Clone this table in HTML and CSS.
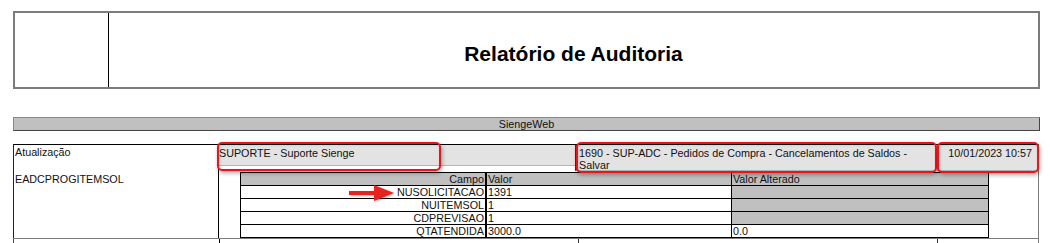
FILE: index.html
```html
<!DOCTYPE html>
<html lang="pt-BR">
<head>
<meta charset="utf-8">
<title>Relatório de Auditoria</title>
<link rel="stylesheet" href="styles.css">
</head>
<body>
<div class="page">
  <div class="hdr">
    <div class="hdr-logo"></div>
    <div class="hdr-title">Relatório de Auditoria</div>
  </div>
  <div class="bar">SiengeWeb</div>
  <div class="main">
    <div class="labels">
      <div class="lbl">Atualização</div>
      <div class="lbl lbl-entity">EADCPROGITEMSOL</div>
    </div>
    <div class="content">
      <div class="toprow">
        <div class="cell c-user">SUPORTE - Suporte Sienge</div>
        <div class="cell c-op">1690 - SUP-ADC - Pedidos de Compra - Cancelamentos de Saldos - Salvar</div>
        <div class="cell c-date">10/01/2023 10:57</div>
      </div>
      <table class="fields">
        <tr class="th">
          <td class="campo">Campo</td>
          <td class="valor">Valor</td>
          <td class="alt">Valor Alterado</td>
        </tr>
        <tr>
          <td class="campo">NUSOLICITACAO</td>
          <td class="valor">1391</td>
          <td class="alt grey"></td>
        </tr>
        <tr>
          <td class="campo">NUITEMSOL</td>
          <td class="valor">1</td>
          <td class="alt grey"></td>
        </tr>
        <tr>
          <td class="campo">CDPREVISAO</td>
          <td class="valor">1</td>
          <td class="alt grey"></td>
        </tr>
        <tr>
          <td class="campo">QTATENDIDA</td>
          <td class="valor">3000.0</td>
          <td class="alt">0.0</td>
        </tr>
      </table>
    </div>
  </div>
  <div class="nextrow">
    <div class="n1"></div>
    <div class="n2"></div>
    <div class="n3"></div>
    <div class="n4"></div>
  </div>

  <div class="mark mark-user"></div>
  <div class="mark mark-op"></div>
  <div class="mark mark-date"></div>
  <svg class="arrow" width="48" height="18" viewBox="0 0 48 18">
    <path d="M1 7 H26 V1 L46 9 L26 17 V11 H1 Z" fill="#e8231f"/>
  </svg>
</div>
</body>
</html>
```

FILE: styles.css
```css
html, body {
  margin: 0;
  padding: 0;
  background: #fff;
}

body {
  font-family: "Liberation Sans", Arial, sans-serif;
  font-size: 10.75px;
  color: #111;
}

.page {
  position: relative;
  padding: 11px 10px 0 13px;
  height: 232px;
  overflow: hidden;
}

.hdr {
  display: grid;
  grid-template-columns: 94px 1fr;
  width: 1027px;
  height: 78px;
  box-sizing: border-box;
  border: 2px solid #7c7c7c;
}

.hdr-logo {
  border-right: 1px solid #000;
}

.hdr-title {
  display: flex;
  align-items: center;
  justify-content: center;
  padding-top: 8px;
  font-size: 21px;
  font-weight: bold;
  color: #000;
}

.bar {
  margin-top: 28px;
  width: 1027px;
  height: 14px;
  box-sizing: border-box;
  background: #c0c0c0;
  border: 1px solid #444;
  border-top-color: #8a8a8a;
  border-left-color: #8a8a8a;
  text-align: center;
  line-height: 12px;
}

.main {
  margin-top: 13px;
  width: 1026px;
  height: 94px;
  box-sizing: border-box;
  display: flex;
  border-top: 1px solid #000;
  border-left: 1px solid #222;
  border-right: 1px solid #7c7c7c;
}

.labels {
  width: 204px;
  padding: 1px 1px 0;
  box-sizing: border-box;
}

.lbl {
  line-height: 13px;
}

.lbl-entity {
  margin-top: 14px;
}

.content {
  flex: 1;
  border-left: 1px solid #000;
}

.toprow {
  display: flex;
  height: 27px;
}

.cell {
  background: #e3e3e3;
  line-height: 12px;
  box-sizing: border-box;
}

.c-user {
  width: 356px;
  height: 21px;
  padding: 2px 0 0 0;
  border-bottom: 1px solid #b4b4b4;
}

.c-op {
  width: 360px;
  height: 26px;
  padding: 2px 0 0 2px;
  border-left: 2px solid #333;
  border-bottom: 1px solid #b4b4b4;
}

.c-date {
  margin-left: 2px;
  width: 100px;
  height: 26px;
  padding: 2px 5px 0 0;
  text-align: right;
  border-bottom: 1px solid #b4b4b4;
}

.fields {
  margin-left: 21px;
  width: 748px;
  border-collapse: collapse;
  table-layout: fixed;
}

.fields td {
  height: 12px;
  padding: 0 1px;
  line-height: 12px;
  border: 1px solid #000;
  white-space: nowrap;
  overflow: hidden;
}

.fields .campo {
  width: 242px;
  text-align: right;
  border-right-width: 2px;
}

.fields .valor {
  width: 242px;
}

.fields .alt {
  width: 254px;
}

.fields .th td,
.fields .grey {
  background: #c0c0c0;
}

.fields tr:not(.th) .campo,
.fields tr:not(.th) .valor {
  background: #fff;
}

.nextrow {
  display: flex;
  width: 1026px;
  height: 8px;
  border-top: 1px solid #7c7c7c;
}

.nextrow .n1 {
  width: 205px;
  border-left: 1px solid #444;
}

.nextrow .n2 {
  width: 358px;
  border-left: 1px solid #000;
}

.nextrow .n3 {
  width: 358px;
  border-left: 1px solid #333;
}

.nextrow .n4 {
  flex: 1;
  border-left: 1px solid #333;
  border-right: 1px solid #7c7c7c;
}

.mark {
  position: absolute;
  box-sizing: border-box;
  border: 2px solid #e8151a;
  border-radius: 5px;
  box-shadow: 1px 2px 4px rgba(0, 0, 0, 0.35), inset 1px 1px 3px rgba(0, 0, 0, 0.15);
}

.mark-user {
  left: 217px;
  top: 142px;
  width: 224px;
  height: 29px;
}

.mark-op {
  left: 576px;
  top: 142px;
  width: 361px;
  height: 31px;
}

.mark-date {
  left: 937px;
  top: 142px;
  width: 102px;
  height: 31px;
}

.arrow {
  position: absolute;
  left: 348px;
  top: 184px;
  filter: drop-shadow(1px 1px 1px rgba(0, 0, 0, 0.3));
}
```
